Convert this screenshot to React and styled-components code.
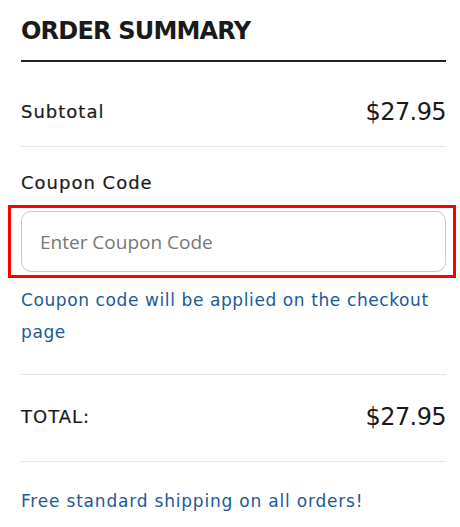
import React from "react";
import styled, { createGlobalStyle } from "styled-components";

const GlobalStyle = createGlobalStyle`
  body {
    margin: 0;
    background: #ffffff;
    font-family: "DejaVu Sans", "Liberation Sans", sans-serif;
  }
`;

const Panel = styled.div`
  width: 425px;
  padding: 0 14px 0 21px;
  color: #1a1a1a;
`;

const Heading = styled.h2`
  margin: 0;
  padding: 17px 0 15px;
  font-size: 24px;
  line-height: 28px;
  font-weight: 700;
  letter-spacing: -0.8px;
  border-bottom: 2px solid #222;
`;

const Row = styled.div`
  display: flex;
  justify-content: space-between;
  align-items: center;
  padding: ${(p) => p.top}px 0 ${(p) => p.bottom}px;
  line-height: 24px;
  border-bottom: 1px solid #e4e4e4;
`;

const Label = styled.span`
  font-size: 18px;
  letter-spacing: 1px;
  -webkit-text-stroke: 0.2px #1a1a1a;
`;

const Price = styled.span`
  font-size: 24px;
  letter-spacing: -0.6px;
`;

const CouponBlock = styled.div`
  padding: 24px 0 26px;
  border-bottom: 1px solid #e4e4e4;
`;

const CouponLabel = styled(Label)`
  display: block;
  line-height: 24px;
  margin-bottom: 10px;
`;

const Highlight = styled.div`
  margin: 0 -10px 0 -13px;
  padding: 3px 7px 3px 10px;
  border: 3px solid #ff0000;
`;

const Input = styled.input`
  box-sizing: border-box;
  display: block;
  width: 100%;
  height: 61px;
  padding: 0 18px;
  border: 1px solid #c8c8c8;
  border-radius: 10px;
  font-family: "Open Sans", sans-serif;
  font-size: 19px;
  color: #333;
  outline: none;
  &::placeholder {
    color: #777;
  }
`;

const Note = styled.p`
  margin: 6px 0 0;
  font-size: 17px;
  line-height: 32px;
  letter-spacing: 0.6px;
  color: #1a5a9a;
`;

const Shipping = styled.p`
  margin: 0;
  padding-top: 27px;
  font-size: 17px;
  line-height: 24px;
  letter-spacing: 0.8px;
  color: #1a5a9a;
`;

export default function App() {
  return (
    <>
      <GlobalStyle />
      <Panel>
        <Heading>ORDER SUMMARY</Heading>
        <Row top={38} bottom={22}>
          <Label>Subtotal</Label>
          <Price>$27.95</Price>
        </Row>
        <CouponBlock>
          <CouponLabel>Coupon Code</CouponLabel>
          <Highlight>
            <Input placeholder="Enter Coupon Code" />
          </Highlight>
          <Note>Coupon code will be applied on the checkout page</Note>
        </CouponBlock>
        <Row top={30} bottom={32}>
          <Label>TOTAL:</Label>
          <Price>$27.95</Price>
        </Row>
        <Shipping>Free standard shipping on all orders!</Shipping>
      </Panel>
    </>
  );
}
